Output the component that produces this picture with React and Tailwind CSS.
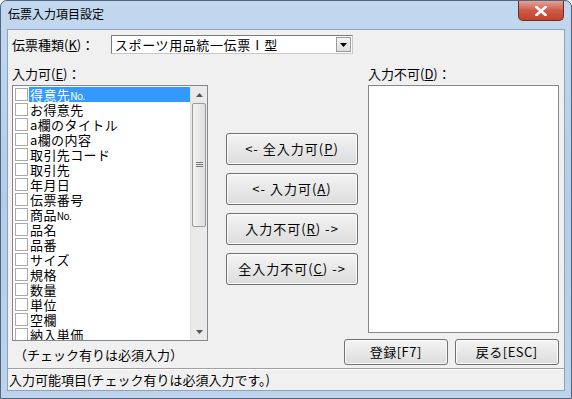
import React, { useState } from 'react';

const items = [
  '得意先No.',
  'お得意先',
  'a欄のタイトル',
  'a欄の内容',
  '取引先コード',
  '取引先',
  '年月日',
  '伝票番号',
  '商品No.',
  '品名',
  '品番',
  'サイズ',
  '規格',
  '数量',
  '単位',
  '空欄',
  '納入単価',
];

const font = { fontFamily: '"Noto Sans CJK JP", "Liberation Sans", sans-serif' };

// Win7 style push button
const Btn = ({ children, className }) => (
  <button
    className={`flex items-center justify-center border border-[#707070] rounded-[3px] bg-gradient-to-b from-[#f4f4f4] to-[#dcdcdc] text-[13px] text-black shadow-[inset_0_0_0_1px_#fcfcfc] ${className}`}
  >
    {children}
  </button>
);

const U = ({ children }) => <span className="underline">{children}</span>;

// "No." is drawn small like the bitmap font in the original
const Label = ({ text }) => {
  if (text.endsWith('No.')) {
    return (
      <>
        {text.slice(0, -3)}
        <span className="text-[10px] tracking-[-0.5px]">No.</span>
      </>
    );
  }
  return text;
};

const App = () => {
  const [selected, setSelected] = useState(0);

  return (
    <div className="w-[572px] h-[399px] bg-[#f0f0f0]" style={font}>
      <div className="w-full h-full flex flex-col rounded-t-[7px] border border-[#52657c] bg-gradient-to-b from-[#c2d8ef] via-[#b3cde8] to-[#bcd3eb]">
        {/* title bar */}
        <div className="h-[28px] flex items-start justify-between">
          <div className="pl-[7px] pt-[5px] text-[12px] text-black leading-[16px]">伝票入力項目設定</div>
          <div className="mr-[7px] w-[46px] h-[20px] rounded-b-[5px] border border-t-0 border-[#6d2b23] bg-gradient-to-b from-[#e3a497] via-[#cc5a48] to-[#c0432f] flex items-center justify-center">
            <svg width="12" height="10" viewBox="0 0 12 10">
              <path d="M1.5 1 L10.5 9 M10.5 1 L1.5 9" stroke="#fff" strokeWidth="2.6" strokeLinecap="square" />
            </svg>
          </div>
        </div>

        {/* client area */}
        <div className="flex-1 mx-[6px] mb-[7px] border border-[#8aa2bd] bg-[#f0f0f0] flex flex-col">
          <div className="flex-1 pl-[4px] pr-[5px] pt-[5px]">
            {/* combo row */}
            <div className="flex items-center h-[19px]">
              <div className="w-[99px] text-[13px] leading-none">伝票種類(<U>K</U>)：</div>
              <div className="w-[242px] h-[19px] bg-white border border-[#7a7a7a] border-r-[#c8c8c8] border-b-[#c8c8c8] flex items-center">
                <div className="flex-1 pl-[3px] text-[13px] tracking-[0.6px] leading-none">スポーツ用品統一伝票Ⅰ型</div>
                <div className="w-[15px] h-[15px] mr-[1px] bg-gradient-to-b from-[#f4f4f4] to-[#dedede] border border-[#9a9a9a] flex items-center justify-center">
                  <svg width="7" height="4" viewBox="0 0 7 4"><path d="M0 0 H7 L3.5 4 Z" fill="#000" /></svg>
                </div>
              </div>
            </div>

            <div className="flex mt-[13px]">
              {/* left column */}
              <div className="w-[196px] flex flex-col">
                <div className="h-[18px] text-[13px] leading-[14px]">入力可(<U>E</U>)：</div>
                <div className="h-[256px] bg-white border border-[#828790] flex">
                  <div className="flex-1 pt-[1px] overflow-hidden">
                    {items.map((t, i) => (
                      <div key={t} className="h-[15px] flex items-center" onClick={() => setSelected(i)}>
                        <div className="ml-[2px] w-[13px] h-[13px] border border-[#a9a9a9] bg-white shrink-0" />
                        <div
                          className={`ml-[1px] flex-1 h-[15px] pl-[1px] text-[13px] tracking-[0.4px] leading-[15px] whitespace-nowrap ${
                            selected === i ? 'bg-[#3399ff] text-white' : 'text-black'
                          }`}
                        >
                          <Label text={t} />
                        </div>
                      </div>
                    ))}
                  </div>
                  {/* scrollbar */}
                  <div className="w-[17px] bg-[#eaeaea] border-l border-[#e2e2e2] flex flex-col">
                    <div className="h-[17px] flex items-center justify-center">
                      <svg width="7" height="4" viewBox="0 0 7 4"><path d="M0 4 H7 L3.5 0 Z" fill="#555" /></svg>
                    </div>
                    <div className="h-[124px] mx-[1px] rounded-[2px] border border-[#9a9a9a] bg-gradient-to-r from-[#f3f3f3] to-[#dedede] flex items-center justify-center">
                      <svg width="7" height="6" viewBox="0 0 7 6">
                        <path d="M0 0.5 H7 M0 2.5 H7 M0 4.5 H7" stroke="#777" strokeWidth="1" />
                      </svg>
                    </div>
                    <div className="flex-1" />
                    <div className="h-[17px] flex items-center justify-center">
                      <svg width="7" height="4" viewBox="0 0 7 4"><path d="M0 0 H7 L3.5 4 Z" fill="#555" /></svg>
                    </div>
                  </div>
                </div>
                <div className="mt-[6px] pl-[2px] text-[13px] leading-[16px]">（チェック有りは必須入力）</div>
              </div>

              {/* middle column */}
              <div className="ml-[18px] w-[132px] pt-[66px] flex flex-col gap-[8px]">
                <Btn className="h-[32px] tracking-[1px]">&lt;- 全入力可(<U>P</U>)</Btn>
                <Btn className="h-[32px] tracking-[1px]">&lt;- 入力可(<U>A</U>)</Btn>
                <Btn className="h-[32px] tracking-[1px]">入力不可(<U>R</U>) -&gt;</Btn>
                <Btn className="h-[32px] tracking-[1px]">全入力不可(<U>C</U>) -&gt;</Btn>
              </div>

              {/* right column */}
              <div className="ml-[10px] w-[191px] flex flex-col">
                <div className="h-[18px] text-[13px] leading-[14px]">入力不可(<U>D</U>)：</div>
                <div className="h-[248px] bg-white border border-[#828790]" />
                <div className="flex mt-[6px] -ml-[24px] gap-[7px]">
                  <Btn className="w-[104px] h-[26px] tracking-[0.5px]">登録[F7]</Btn>
                  <Btn className="w-[105px] h-[26px] tracking-[0.5px]">戻る[ESC]</Btn>
                </div>
              </div>
            </div>
          </div>

          {/* status bar */}
          <div className="h-[22px] border-t border-[#a0a0a0] shadow-[inset_0_1px_0_#ffffff] flex items-center pl-[1px] text-[13px] leading-none">
            入力可能項目(チェック有りは必須入力です。)
          </div>
        </div>
      </div>
    </div>
  );
};

export default App;
